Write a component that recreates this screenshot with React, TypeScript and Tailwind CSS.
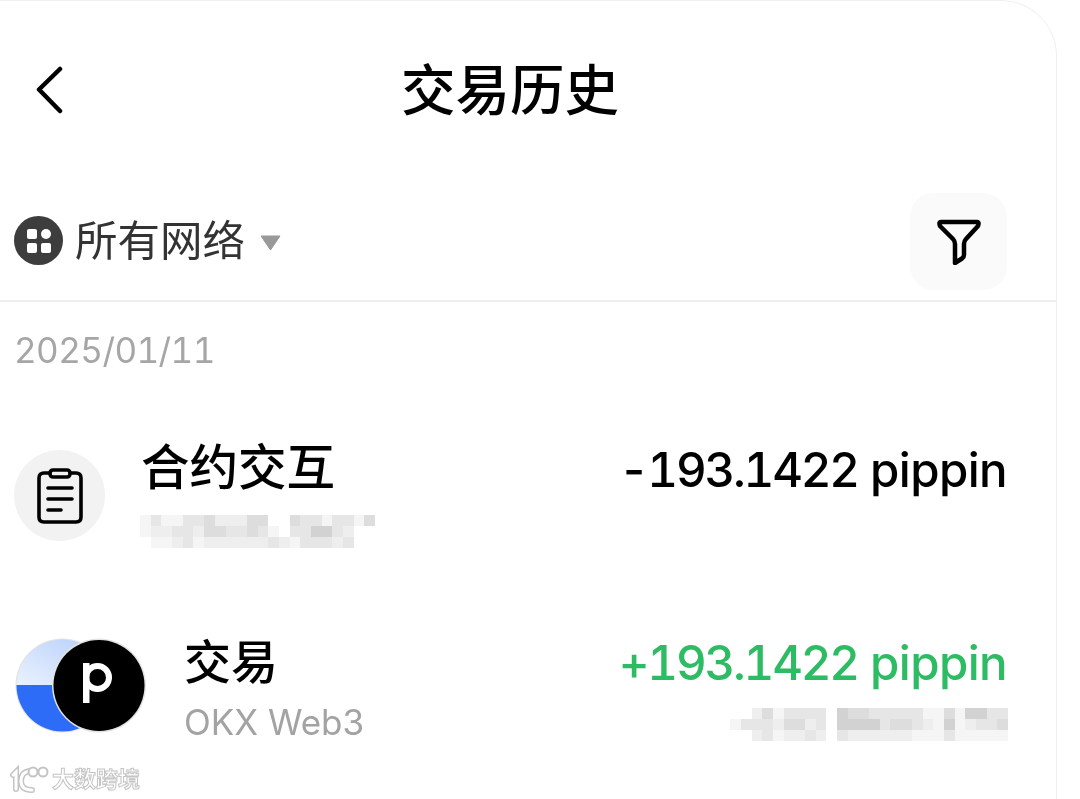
const rowA = [
  "1311334222440043313314",
  "1223324433431033553200",
  "0112312222223213332300",
];
const rowB = [
  "00241333305443333311415533",
  "13332442305555344321512334",
  "00231223203222222111311111",
];
const grays = ["#ffffff", "#f5f5f5", "#eeeeee", "#e6e6e6", "#dddddd", "#d2d2d2"];

function Mosaic({ rows, className }: { rows: string[]; className: string }) {
  return (
    <div className={`flex flex-col ${className}`}>
      {rows.map((row, r) => (
        <div key={r} className="flex">
          {row.split("").map((v, c) => (
            <div key={c} className="h-[11px] w-[10.7px]" style={{ backgroundColor: grays[Number(v)] }} />
          ))}
        </div>
      ))}
    </div>
  );
}

function Amount({ value, className }: { value: string; className: string }) {
  return (
    <div className={`text-[47.5px] font-medium leading-[60px] ${className}`}>
      <span className="tabular-nums tracking-[-2.2px]">{value}</span>
      <span className="tracking-[-0.6px]"> pippin</span>
    </div>
  );
}

export default function App() {
  return (
    <div className="relative h-[799px] w-[1080px] overflow-hidden bg-white font-['Inter','Noto_Sans_CJK_SC',sans-serif] text-black">
      <div className="h-[799px] w-[1057px] rounded-tr-[56px] border-t border-r border-[#eff0f3] blur-[0.7px]">
        <header className="grid h-[180px] grid-cols-[1fr_auto_1fr] items-center pl-[36px] pr-[72px]">
          <svg className="-mt-[2px]" width="28" height="48" viewBox="0 0 28 48" fill="none" stroke="#000" strokeWidth="4.5" strokeLinecap="round" strokeLinejoin="round">
            <path d="M24 3 L3 23.5 L24 45" />
          </svg>
          <h1 className="-mt-[3px] text-[54.5px] font-medium leading-[60px]">交易历史</h1>
          <div />
        </header>

        <div className="flex h-[121px] items-center justify-between border-b-2 border-[#eeeff1] pl-[14px] pr-[49px]">
          <div className="flex items-center">
            <div className="grid h-[49px] w-[49px] grid-cols-[10px_10px] content-center justify-center gap-[4px] rounded-full bg-[#3d3d3d]">
              <span className="h-[10px] w-[10px] rounded-[2px] bg-white" />
              <span className="h-[10px] w-[10px] rounded-full bg-white" />
              <span className="h-[10px] w-[10px] rounded-[2px] bg-white" />
              <span className="h-[10px] w-[10px] rounded-[2px] bg-white" />
            </div>
            <span className="ml-[12px] text-[42.5px] leading-[50px] text-[#333333]">所有网络</span>
            <svg className="ml-[15px] mt-[4px]" width="21" height="16" viewBox="0 0 21 16">
              <path d="M1 1 H20 L10.5 15 Z" fill="#999999" stroke="#999999" strokeLinejoin="round" />
            </svg>
          </div>
          <button className="mt-[2px] flex h-[97px] w-[97px] items-center justify-center rounded-[24px] bg-[#fafafa]">
            <svg width="44" height="46" viewBox="0 0 44 46" fill="none" stroke="#000" strokeWidth="4.5" strokeLinejoin="round" strokeLinecap="round">
              <path d="M4 3 H40 Q42.5 3 41 7 L29 20 Q27 22 27 25 V36 Q27 38 25 39.5 L18 44 V25 Q18 22 16 20 L3 7 Q1.5 3 4 3 Z" />
            </svg>
          </button>
        </div>

        <div className="flex h-[96px] items-center pl-[14px] text-[35px] tabular-nums tracking-[-0.6px] leading-[40px] text-[#a6a6a6]">2025/01/11</div>

        <div className="flex h-[195px] items-start justify-between pl-[14px] pr-[49px] pt-[40px]">
          <div className="flex items-start">
            <div className="mt-[12px] flex h-[91px] w-[91px] items-center justify-center rounded-full bg-[#f2f2f2]">
              <svg width="46" height="56" viewBox="0 0 46 56" fill="none" stroke="#000" strokeWidth="3.6" strokeLinecap="round" strokeLinejoin="round">
                <path d="M13 5 H7 Q2 5 2 10 V49 Q2 54 7 54 H39 Q44 54 44 49 V10 Q44 5 39 5 H33" />
                <rect x="13" y="2" width="20" height="7" rx="3" />
                <path d="M11 20 H35 M11 31 H35 M11 42 H24" />
              </svg>
            </div>
            <div className="ml-[35px] flex flex-col">
              <div className="h-[60px] pl-[1px] text-[48.5px] font-medium leading-[60px]">合约交互</div>
              <Mosaic rows={rowA} className="mt-[17px]" />
            </div>
          </div>
          <Amount value="-193.1422" className="mt-[2px]" />
        </div>

        <div className="flex items-start justify-between pl-[15px] pr-[49px] pt-[39px]">
          <div className="flex items-start">
            <div className="mt-[6px] flex">
              <svg width="131" height="95" viewBox="0 0 131 95">
                <defs>
                  <linearGradient id="sky" x1="0.8" y1="0" x2="0.2" y2="1">
                    <stop offset="0" stopColor="#b9d1fb" />
                    <stop offset="1" stopColor="#ffffff" />
                  </linearGradient>
                  <clipPath id="top"><rect x="0" y="0" width="100" height="47" /></clipPath>
                  <clipPath id="bottom"><rect x="0" y="47" width="100" height="48" /></clipPath>
                </defs>
                <circle cx="47.5" cy="47.5" r="47" fill="#e3e3e3" />
                <circle cx="47.5" cy="47.5" r="46" fill="url(#sky)" clipPath="url(#top)" />
                <circle cx="47.5" cy="47.5" r="46" fill="#2c6cf6" clipPath="url(#bottom)" />
                <circle cx="84" cy="47.5" r="47" fill="#e3e3e3" />
                <circle cx="84" cy="47.5" r="45.5" fill="#000000" />
                <circle cx="82.5" cy="39.5" r="11.5" fill="none" stroke="#ffffff" strokeWidth="6" />
                <rect x="68" y="25" width="6.5" height="40" fill="#ffffff" />
              </svg>
            </div>
            <div className="ml-[38px] flex flex-col">
              <div className="h-[60px] text-[47px] font-medium leading-[60px]">交易</div>
              <div className="mt-[10px] h-[40px] text-[35px] leading-[40px] text-[#a3a3a3]">OKX Web3</div>
            </div>
          </div>
          <div className="flex flex-col items-end">
            <Amount value="+193.1422" className="mt-[1px] text-[#2dbb63]" />
            <Mosaic rows={rowB} className="mt-[15px] -mr-[1px]" />
          </div>
        </div>
      </div>

      <div className="absolute left-[9px] top-[764px] flex items-center blur-[0.4px]">
        <svg width="42" height="30" viewBox="0 0 42 30" fill="none" strokeLinecap="round">
          <g stroke="#c4c4c4" strokeWidth="6">
            <path d="M4 11 L7 8 V25" />
            <path d="M21 7 Q12 8 12 17 Q12 26 23 26" />
          </g>
          <g stroke="#ffffff" strokeWidth="3">
            <path d="M4 11 L7 8 V25" />
            <path d="M21 7 Q12 8 12 17 Q12 26 23 26" />
          </g>
          <circle cx="24" cy="8" r="4.5" stroke="#c4c4c4" strokeWidth="2" fill="#ffffff" />
          <circle cx="34" cy="8" r="4.5" stroke="#c4c4c4" strokeWidth="2" fill="#ffffff" />
        </svg>
        <span className="ml-[1px] text-[22px] font-bold leading-[28px] text-white [-webkit-text-stroke:1px_#c4c4c4]">大数跨境</span>
      </div>
    </div>
  );
}
